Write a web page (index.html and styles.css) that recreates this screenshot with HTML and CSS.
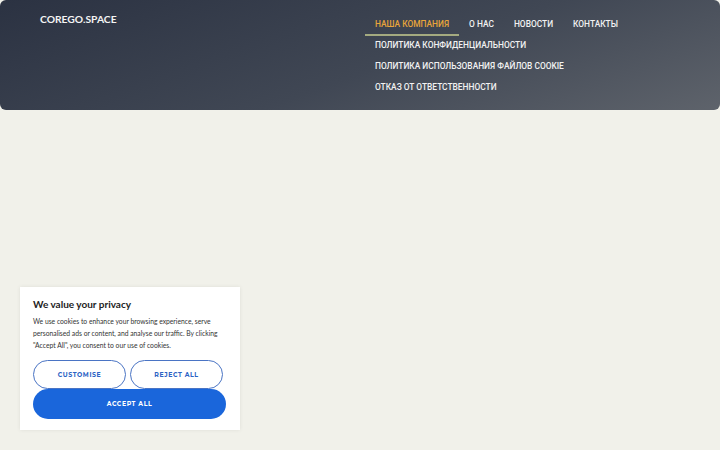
FILE: index.html
```html
<!DOCTYPE html>
<html lang="ru">
<head>
<meta charset="utf-8">
<title>COREGO.SPACE</title>
<link rel="stylesheet" href="styles.css">
</head>
<body>
<header class="header">
  <div class="logo">COREGO.SPACE</div>
  <nav class="nav">
    <a class="nav-item active">НАША КОМПАНИЯ</a>
    <a class="nav-item">О НАС</a>
    <a class="nav-item">НОВОСТИ</a>
    <a class="nav-item">КОНТАКТЫ</a>
    <a class="nav-item">ПОЛИТИКА КОНФИДЕНЦИАЛЬНОСТИ</a>
    <a class="nav-item">ПОЛИТИКА ИСПОЛЬЗОВАНИЯ ФАЙЛОВ COOKIE</a>
    <a class="nav-item">ОТКАЗ ОТ ОТВЕТСТВЕННОСТИ</a>
  </nav>
</header>
<main class="main">
  <section class="cookie">
    <h2 class="cookie-title">We value your privacy</h2>
    <p class="cookie-text">We use cookies to enhance your browsing experience, serve personalised ads or content, and analyse our traffic. By clicking "Accept All", you consent to our use of cookies.</p>
    <div class="cookie-row">
      <button class="btn btn-outline">CUSTOMISE</button>
      <button class="btn btn-outline">REJECT ALL</button>
    </div>
    <button class="btn btn-accept">ACCEPT ALL</button>
  </section>
</main>
</body>
</html>
```
FILE: styles.css
```css
* { box-sizing: border-box; }
html, body { margin: 0; padding: 0; }
body {
  width: 720px;
  height: 450px;
  overflow: hidden;
  background: #f1f1ea;
  font-family: "Lato", "Liberation Sans", sans-serif;
}
.header {
  height: 110px;
  border-radius: 6px;
  background: linear-gradient(160deg, #2b3242 0%, #404754 55%, #5e636b 100%);
  display: flex;
  justify-content: space-between;
  padding: 13px 40px 0 40px;
}
.logo {
  color: #f4f4f4;
  font-family: "Lato", sans-serif;
  font-weight: 700;
  font-size: 10.3px;
  line-height: 12px;
}
.nav {
  width: 315px;
  display: flex;
  flex-wrap: wrap;
  align-content: flex-start;
  padding-top: 2px;
}
.nav-item {
  display: block;
  padding: 0 10px;
  height: 21px;
  line-height: 19px;
  border-bottom: 2px solid transparent;
  color: #f2f2f2;
  font-family: "Roboto", sans-serif;
  font-weight: 500;
  font-size: 8.4px;
  white-space: nowrap;
}
.nav-item.active {
  color: #e9a53a;
  border-bottom-color: #a4aa80;
}
.main {
  padding: 177px 0 0 20px;
}
.cookie {
  width: 220px;
  height: 143px;
  background: #fff;
  box-shadow: 0 0 4px rgba(0,0,0,0.08);
  padding: 11px 13px;
}
.cookie-title {
  margin: 0;
  font-size: 10px;
  line-height: 12px;
  font-weight: 700;
  color: #222;
}
.cookie-text {
  margin: 5px 0 9px 0;
  font-size: 6.75px;
  line-height: 12px;
  color: #333;
}
.cookie-row {
  display: flex;
  gap: 4px;
}
.btn {
  font-family: "Montserrat", "Lato", sans-serif;
  font-weight: 700;
  font-size: 6.2px;
  letter-spacing: 0.6px;
  border-radius: 15px;
  cursor: pointer;
}
.btn-outline {
  width: 93px;
  height: 29px;
  background: #fff;
  border: 1.5px solid #4a74c4;
  color: #2a62c4;
}
.btn-accept {
  display: block;
  width: 193px;
  height: 30px;
  background: #1a66db;
  border: none;
  color: #fff;
}
```
